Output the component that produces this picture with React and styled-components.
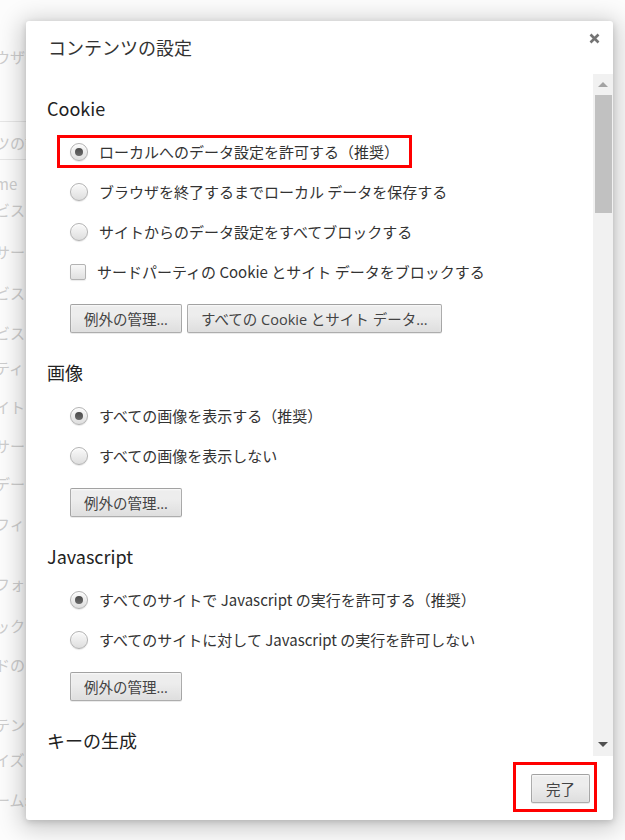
import React from "react";
import styled, { createGlobalStyle } from "styled-components";

const GlobalStyle = createGlobalStyle`
  html, body {
    margin: 0;
    padding: 0;
    background: #fcfcfc;
  }
  body {
    font-family: "Noto Sans CJK JP", "Noto Sans", sans-serif;
    color: #333;
  }
`;

// faded settings page that sits behind the dialog
const backdropLines = [
  { text: "ウザ(", top: 47 },
  { text: "ツの設", top: 54, divided: true },
  { text: "me", top: 14 },
  { text: "ビスを", top: 6 },
  { text: "サード", top: 22 },
  { text: "ビス", top: 21 },
  { text: "ビス", top: 20 },
  { text: "ティ", top: 15 },
  { text: "イト", top: 19 },
  { text: "サード", top: 19 },
  { text: "デー", top: 18 },
  { text: "フィ", top: 20 },
  { text: "フォ", top: 40 },
  { text: "ック", top: 22 },
  { text: "ドの", top: 19 },
  { text: "テン", top: 40 },
  { text: "イズ", top: 15 },
  { text: "ーム:", top: 20 },
];

const sections = [
  {
    title: "Cookie",
    options: [
      { label: "ローカルへのデータ設定を許可する（推奨）", checked: true, highlight: true },
      { label: "ブラウザを終了するまでローカル データを保存する" },
      { label: "サイトからのデータ設定をすべてブロックする" },
      { label: "サードパーティの Cookie とサイト データをブロックする", type: "checkbox" },
    ],
    buttons: ["例外の管理...", "すべての Cookie とサイト データ..."],
  },
  {
    title: "画像",
    options: [
      { label: "すべての画像を表示する（推奨）", checked: true },
      { label: "すべての画像を表示しない" },
    ],
    buttons: ["例外の管理..."],
  },
  {
    title: "Javascript",
    options: [
      { label: "すべてのサイトで Javascript の実行を許可する（推奨）", checked: true },
      { label: "すべてのサイトに対して Javascript の実行を許可しない" },
    ],
    buttons: ["例外の管理..."],
  },
  {
    title: "キーの生成",
    options: [
      { label: "すべてのサイトにキーの生成を許可する" },
      { label: "すべてのサイトでキーの生成を許可しない（推奨）", checked: true },
    ],
    buttons: ["例外の管理..."],
  },
];

const App = () => {
  return (
    <>
      <GlobalStyle />
      <Page>
        <Backdrop>
          {backdropLines.map((line, i) => (
            <BackdropLine key={i} $top={line.top} $divided={line.divided}>
              {line.text}
            </BackdropLine>
          ))}
        </Backdrop>

        <Dialog>
          <Header>
            <Title>コンテンツの設定</Title>
            <CloseButton aria-label="閉じる">
              <svg width="11" height="11" viewBox="0 0 11 11">
                <path d="M1.5 1.5 L9.5 9.5 M9.5 1.5 L1.5 9.5" stroke="#747474" strokeWidth="2.6" />
              </svg>
            </CloseButton>
          </Header>

          <Body>
            <ScrollContent>
              {sections.map((section) => (
                <Section key={section.title}>
                  <SectionTitle>{section.title}</SectionTitle>
                  {section.options.map((opt) => (
                    <OptionRow key={opt.label} $highlight={opt.highlight}>
                      {opt.type === "checkbox" ? (
                        <Checkbox />
                      ) : (
                        <Radio $checked={opt.checked} />
                      )}
                      <OptionLabel>{opt.label}</OptionLabel>
                    </OptionRow>
                  ))}
                  <ButtonRow>
                    {section.buttons.map((b) => (
                      <Button key={b}>{b}</Button>
                    ))}
                  </ButtonRow>
                </Section>
              ))}
            </ScrollContent>
            <Scrollbar>
              <ArrowUp />
              <Thumb />
              <Spacer />
              <ArrowDown />
            </Scrollbar>
          </Body>

          <Footer>
            <Highlight>
              <Button $wide>完了</Button>
            </Highlight>
          </Footer>
        </Dialog>
      </Page>
    </>
  );
};

const Page = styled.div`
  position: relative;
  width: 625px;
  height: 840px;
  overflow: hidden;
  background: #fcfcfc;
`;

const Backdrop = styled.div`
  display: flex;
  flex-direction: column;
  margin-left: -5px;
  width: 60px;
`;

const BackdropLine = styled.div`
  margin-top: ${(p) => p.$top}px;
  font-size: 15px;
  line-height: 20px;
  color: #cdcdcd;
  white-space: nowrap;
  ${(p) =>
    p.$divided &&
    `
    border-top: 1px solid #e6e6e6;
    border-bottom: 1px solid #e6e6e6;
    padding: 11px 0 6px;
  `}
`;

const Dialog = styled.div`
  position: absolute;
  left: 26px;
  top: 21px;
  width: 587px;
  height: 799px;
  background: #fff;
  border-radius: 3px;
  display: flex;
  flex-direction: column;
  box-shadow: 0 4px 23px 5px rgba(0, 0, 0, 0.2), 0 2px 6px rgba(0, 0, 0, 0.15);
  overflow: hidden;
`;

const Header = styled.div`
  display: flex;
  justify-content: space-between;
  align-items: flex-start;
  height: 53px;
  box-sizing: border-box;
  padding: 14px 13px 0 22px;
`;

const Title = styled.h1`
  margin: 0;
  font-size: 18px;
  line-height: 24px;
  font-weight: 400;
  color: #333;
`;

const CloseButton = styled.button`
  border: 0;
  background: none;
  padding: 0;
  margin-top: -2px;
  width: 11px;
  height: 11px;
  display: flex;
  cursor: pointer;
`;

const Body = styled.div`
  flex: 1;
  display: flex;
  min-height: 0;
`;

const ScrollContent = styled.div`
  flex: 1;
  overflow: hidden;
  padding: 22px 0 0 21px;
`;

const Section = styled.section`
  display: flex;
  flex-direction: column;
  align-items: flex-start;
  margin-bottom: 27px;
`;

const SectionTitle = styled.h3`
  margin: 0 0 12px;
  font-size: 18px;
  line-height: 24px;
  font-weight: 400;
  color: #222;
`;

const OptionRow = styled.div`
  display: flex;
  align-items: center;
  height: 40px;
  box-sizing: border-box;
  padding-left: 23px;
  ${(p) =>
    p.$highlight &&
    `
    height: 33px;
    margin: 3px 0 4px 10px;
    padding: 0 10px 0 10px;
    border: 3px solid #ff0000;
  `}
`;

const Radio = styled.span`
  position: relative;
  flex: none;
  width: 18px;
  height: 18px;
  box-sizing: border-box;
  border-radius: 50%;
  border: 1px solid #b3b3b3;
  background: linear-gradient(#fafafa, #dedede);
  box-shadow: 0 1px 1px rgba(0, 0, 0, 0.1), inset 0 1px 1px #fff;
  margin-right: 11px;

  &::after {
    content: "";
    display: ${(p) => (p.$checked ? "block" : "none")};
    position: absolute;
    left: 4px;
    top: 4px;
    width: 8px;
    height: 8px;
    border-radius: 50%;
    background: linear-gradient(#4a4a4a, #6a6a6a);
  }
`;

const Checkbox = styled.span`
  flex: none;
  width: 16px;
  height: 16px;
  box-sizing: border-box;
  border-radius: 2px;
  border: 1px solid #b3b3b3;
  background: linear-gradient(#f8f8f8, #e0e0e0);
  box-shadow: 0 1px 1px rgba(0, 0, 0, 0.08);
  margin-right: 11px;
`;

const OptionLabel = styled.span`
  font-size: 15px;
  line-height: 20px;
  color: #333;
  white-space: nowrap;
`;

const ButtonRow = styled.div`
  display: flex;
  gap: 5px;
  margin-top: 12px;
  padding-left: 23px;
`;

const Button = styled.button`
  height: 29px;
  padding: 0 ${(p) => (p.$wide ? "14px" : "13px")};
  min-width: ${(p) => (p.$wide ? "58px" : "0")};
  font-family: "Open Sans", "Noto Sans CJK JP", sans-serif;
  font-size: 14.5px;
  color: #444;
  border: 1px solid rgba(0, 0, 0, 0.27);
  border-radius: 2px;
  background: linear-gradient(#ededed, #ededed 38%, #dedede);
  box-shadow: 0 1px 0 rgba(0, 0, 0, 0.08), inset 0 1px 2px rgba(255, 255, 255, 0.75);
  white-space: nowrap;
  cursor: pointer;
`;

const Scrollbar = styled.div`
  width: 20px;
  flex: none;
  background: #f1f1f1;
  display: flex;
  flex-direction: column;
  align-items: center;
`;

const ArrowUp = styled.span`
  margin-top: 8px;
  width: 0;
  height: 0;
  border-left: 5px solid transparent;
  border-right: 5px solid transparent;
  border-bottom: 5px solid #a3a3a3;
`;

const Thumb = styled.span`
  margin: 8px 0 0 1px;
  width: 17px;
  height: 118px;
  background: #c1c1c1;
`;

const Spacer = styled.span`
  flex: 1;
`;

const ArrowDown = styled.span`
  margin-bottom: 9px;
  width: 0;
  height: 0;
  border-left: 5px solid transparent;
  border-right: 5px solid transparent;
  border-top: 5px solid #505050;
`;

const Footer = styled.div`
  display: flex;
  justify-content: flex-end;
  padding: 6px 16px 8px;
`;

const Highlight = styled.div`
  border: 3px solid #ff0000;
  padding: 9px 4px 6px 15px;
  display: flex;
`;

export default App;
